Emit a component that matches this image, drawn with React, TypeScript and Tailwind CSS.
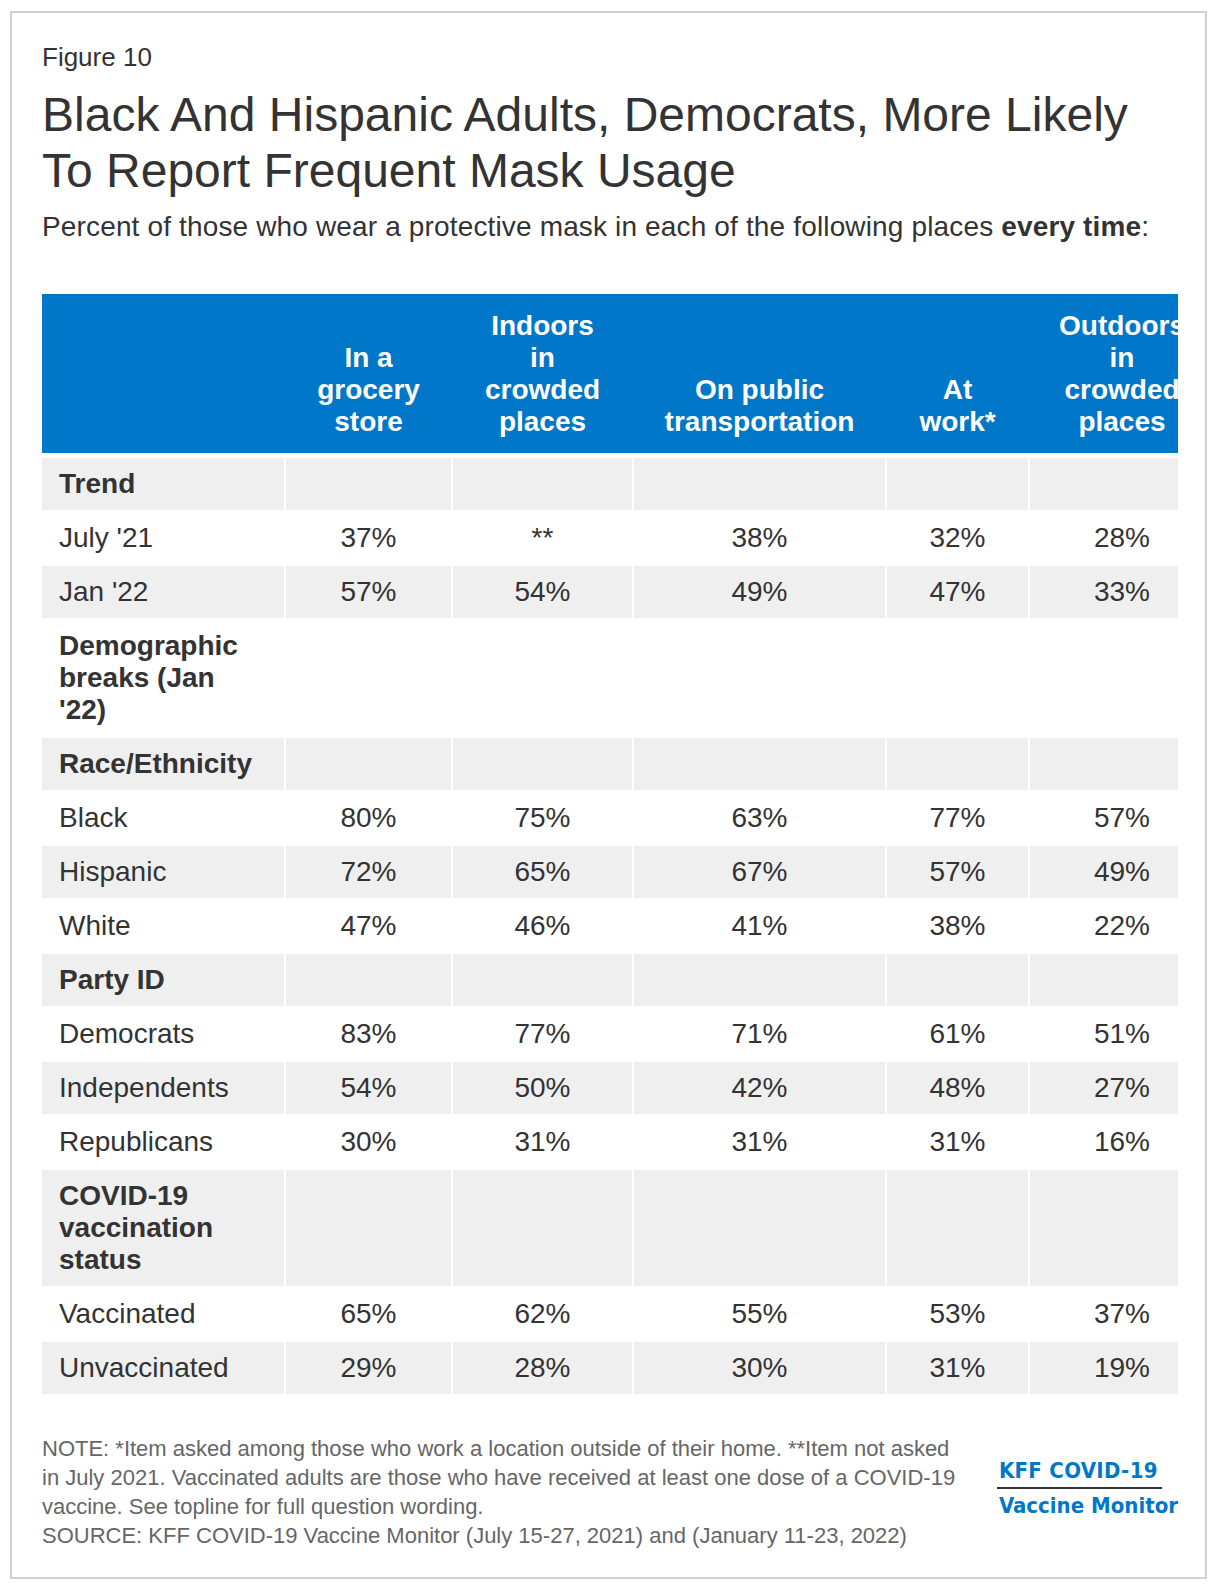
import React from "react";

const cols = ["In a grocery store", "Indoors in crowded places", "On public transportation", "At work*", "Outdoors in crowded places"];

const headerLines = [
  ["In a", "grocery", "store"],
  ["Indoors", "in", "crowded", "places"],
  ["On public", "transportation"],
  ["At", "work*"],
  ["Outdoors", "in", "crowded", "places"],
];

type Row = { label: string; values?: string[]; section?: boolean; shade?: boolean };

const rows: Row[] = [
  { label: "Trend", section: true, shade: true, values: ["", "", "", "", ""] },
  { label: "July '21", values: ["37%", "**", "38%", "32%", "28%"] },
  { label: "Jan '22", shade: true, values: ["57%", "54%", "49%", "47%", "33%"] },
  { label: "Demographic breaks (Jan '22)", section: true },
  { label: "Race/Ethnicity", section: true, shade: true, values: ["", "", "", "", ""] },
  { label: "Black", values: ["80%", "75%", "63%", "77%", "57%"] },
  { label: "Hispanic", shade: true, values: ["72%", "65%", "67%", "57%", "49%"] },
  { label: "White", values: ["47%", "46%", "41%", "38%", "22%"] },
  { label: "Party ID", section: true, shade: true, values: ["", "", "", "", ""] },
  { label: "Democrats", values: ["83%", "77%", "71%", "61%", "51%"] },
  { label: "Independents", shade: true, values: ["54%", "50%", "42%", "48%", "27%"] },
  { label: "Republicans", values: ["30%", "31%", "31%", "31%", "16%"] },
  { label: "COVID-19 vaccination status", section: true, shade: true, values: ["", "", "", "", ""] },
  { label: "Vaccinated", values: ["65%", "62%", "55%", "53%", "37%"] },
  { label: "Unvaccinated", shade: true, values: ["29%", "28%", "30%", "31%", "19%"] },
];

const grid = "grid grid-cols-[242px_165px_179px_251px_141px_184px] gap-x-[2px]";

export default function App() {
  return (
    <div className="min-h-[1590px] bg-white pt-[11px] pl-[10px] font-['Liberation_Sans',Arial,sans-serif] text-[#333333]">
      <div className="w-[1197px] border-2 border-[#d0d0d0] pt-[29px] pl-[30px] pr-[27px] pb-[27px]">
        <p className="text-[26px] leading-[30px]">Figure 10</p>
        <h1 className="mt-[15px] text-[48px] leading-[56px]">
          Black And Hispanic Adults, Democrats, More Likely
          <br />
          To Report Frequent Mask Usage
        </h1>
        <p className="mt-[11px] whitespace-nowrap text-[28px] leading-[34px] tracking-[0.15px]">
          Percent of those who wear a protective mask in each of the following places <b>every time</b>:
        </p>

        {/* table is wider than the frame; last column is cut off like the original */}
        <div className="mt-[50px] overflow-hidden">
          <div className={`${grid} h-[159px] items-end bg-[#0077c8] pb-[15px] text-[28px] font-bold leading-[32px] text-white`}>
            <div />
            {headerLines.map((lines, i) => (
              <div key={cols[i]} className="whitespace-nowrap text-center">
                {lines.map((l, j) => (
                  <div key={j}>{l}</div>
                ))}
              </div>
            ))}
          </div>

          <div className="mt-[5px] flex flex-col gap-y-[2px] text-[28px] leading-[32px]">
            {rows.map((r) => {
              const bg = r.shade ? "bg-[#efefef]" : "bg-white";
              return (
                <div key={r.label} className={grid}>
                  <div className={`${bg} py-[10px] pl-[17px] pr-[26px] ${r.section ? "font-bold" : ""}`}>{r.label}</div>
                  {(r.values ?? ["", "", "", "", ""]).map((v, i) => (
                    <div key={i} className={`${bg} py-[10px] text-center`}>
                      {v}
                    </div>
                  ))}
                </div>
              );
            })}
          </div>
        </div>

        <div className="mt-[40px] flex items-center justify-between">
          <p className="text-[22px] leading-[29px] text-[#666666]">
            NOTE: *Item asked among those who work a location outside of their home. **Item not asked
            <br />
            in July 2021. Vaccinated adults are those who have received at least one dose of a COVID-19
            <br />
            vaccine. See topline for full question wording.
            <br />
            SOURCE: KFF COVID-19 Vaccine Monitor (July 15-27, 2021) and (January 11-23, 2022)
          </p>
          <div className="mb-[8px] font-['DejaVu_Sans_Condensed','DejaVu_Sans',sans-serif] font-bold [font-stretch:condensed] text-[22px] leading-[26px] text-[#0077c8]">
            <div className="w-fit border-b-2 border-[#333333] pb-[3px] pl-[2px] pr-[4px] tracking-[0.3px]">KFF COVID-19</div>
            <div className="pt-[4px] pl-[2px]">Vaccine Monitor</div>
          </div>
        </div>
      </div>
    </div>
  );
}
